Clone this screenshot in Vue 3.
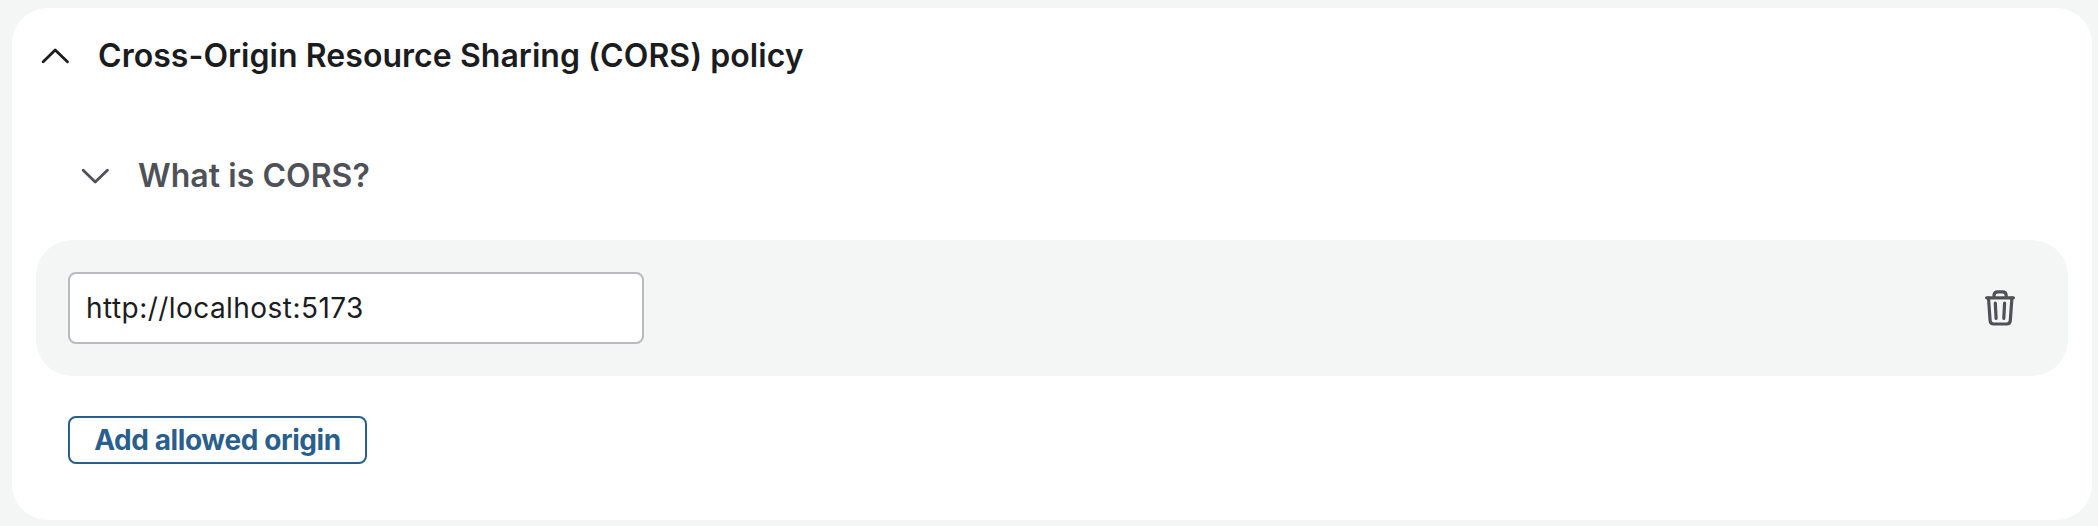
<script setup>
import { ref } from 'vue'

const origins = ref(['http://localhost:5173'])
const addOrigin = () => origins.value.push('')
const removeOrigin = (index) => origins.value.splice(index, 1)
</script>

<template>
  <main class="page">
    <section class="card">
      <header class="heading">
        <svg class="chevron" viewBox="0 0 28 16" aria-hidden="true">
          <path d="M2.2 13.8 14.2 2.1 26.4 13.8" />
        </svg>
        <h2 class="title">Cross-Origin Resource Sharing (CORS) policy</h2>
      </header>
      <div class="heading info">
        <svg class="chevron" viewBox="0 0 28 16" aria-hidden="true">
          <path d="M2.2 2.2 14.2 13.9 26.4 2.2" />
        </svg>
        <h3 class="title subtitle">What is CORS?</h3>
      </div>
      <div v-for="(origin, i) in origins" :key="i" class="origin">
        <input v-model="origins[i]" class="field" type="text" spellcheck="false" aria-label="Allowed origin" />
        <button class="remove" type="button" aria-label="Remove origin" @click="removeOrigin(i)">
          <svg viewBox="0 0 30 36" aria-hidden="true">
            <path d="M1.6 7.8H28.4M9 7.3V5.4Q9 1.8 12.8 1.8H17.4Q21.2 1.8 21.2 5.4V7.3" />
            <path d="M3.5 8 5.1 30.6Q5.4 34 9 34H21.4Q25 34 25.3 30.6L26.9 8" />
            <path d="M10.3 13.2 11.1 28.4M19.6 13.2 18.8 28.4" />
          </svg>
        </button>
      </div>
      <button class="add" type="button" @click="addOrigin">Add allowed origin</button>
    </section>
  </main>
</template>

<style>
body {
  margin: 0;
  background: #f4f6f5;
}
</style>

<style scoped>
.page {
  box-sizing: border-box;
  height: 526px;
  padding: 8px 6px 6px 12px;
  background: #f4f6f5;
  font-family: Inter, "Liberation Sans", sans-serif;
}

.card {
  box-sizing: border-box;
  height: 512px;
  padding: 0 24px;
  border-radius: 36px;
  background: #fff;
}

.heading {
  display: flex;
  align-items: center;
  gap: 29px;
  height: 96px;
  padding-left: 5px;
  color: #1b1c1e;
}

.info {
  box-sizing: border-box;
  height: 136px;
  padding: 8px 0 0 45px;
  color: #4e5157;
}

.chevron {
  width: 28px;
  height: 16px;
}

.chevron path,
.remove path {
  fill: none;
  stroke: currentColor;
  stroke-width: 2.8;
  stroke-linecap: round;
  stroke-linejoin: round;
}

.remove path {
  stroke-width: 3.2;
}

.title {
  margin: 0;
  font-size: 32px;
  line-height: 48px;
  font-weight: 600;
  letter-spacing: 0.05px;
}

.origin {
  display: flex;
  align-items: center;
  justify-content: space-between;
  box-sizing: border-box;
  height: 136px;
  padding: 0 53px 0 32px;
  border-radius: 36px;
  background: #f4f6f5;
}

.field {
  box-sizing: border-box;
  width: 576px;
  height: 72px;
  padding: 0 16px;
  border: 2px solid #babbbf;
  border-radius: 8px;
  outline: none;
  background: #fff;
  color: #1b1c1e;
  font: 400 28px/40px Inter, "Liberation Sans", sans-serif;
  letter-spacing: 0.45px;
}

.remove {
  width: 30px;
  height: 36px;
  padding: 0;
  border: 0;
  background: none;
  color: #4e5157;
}

.remove svg {
  display: block;
  width: 30px;
  height: 36px;
}

.add {
  display: block;
  box-sizing: border-box;
  width: 299px;
  height: 48px;
  margin: 40px 0 0 32px;
  padding: 0;
  border: 2px solid #2a5f8d;
  border-radius: 8px;
  background: #fff;
  color: #2a5f8d;
  font: 700 28px/44px Inter, "Liberation Sans", sans-serif;
  letter-spacing: -0.4px;
}
</style>
